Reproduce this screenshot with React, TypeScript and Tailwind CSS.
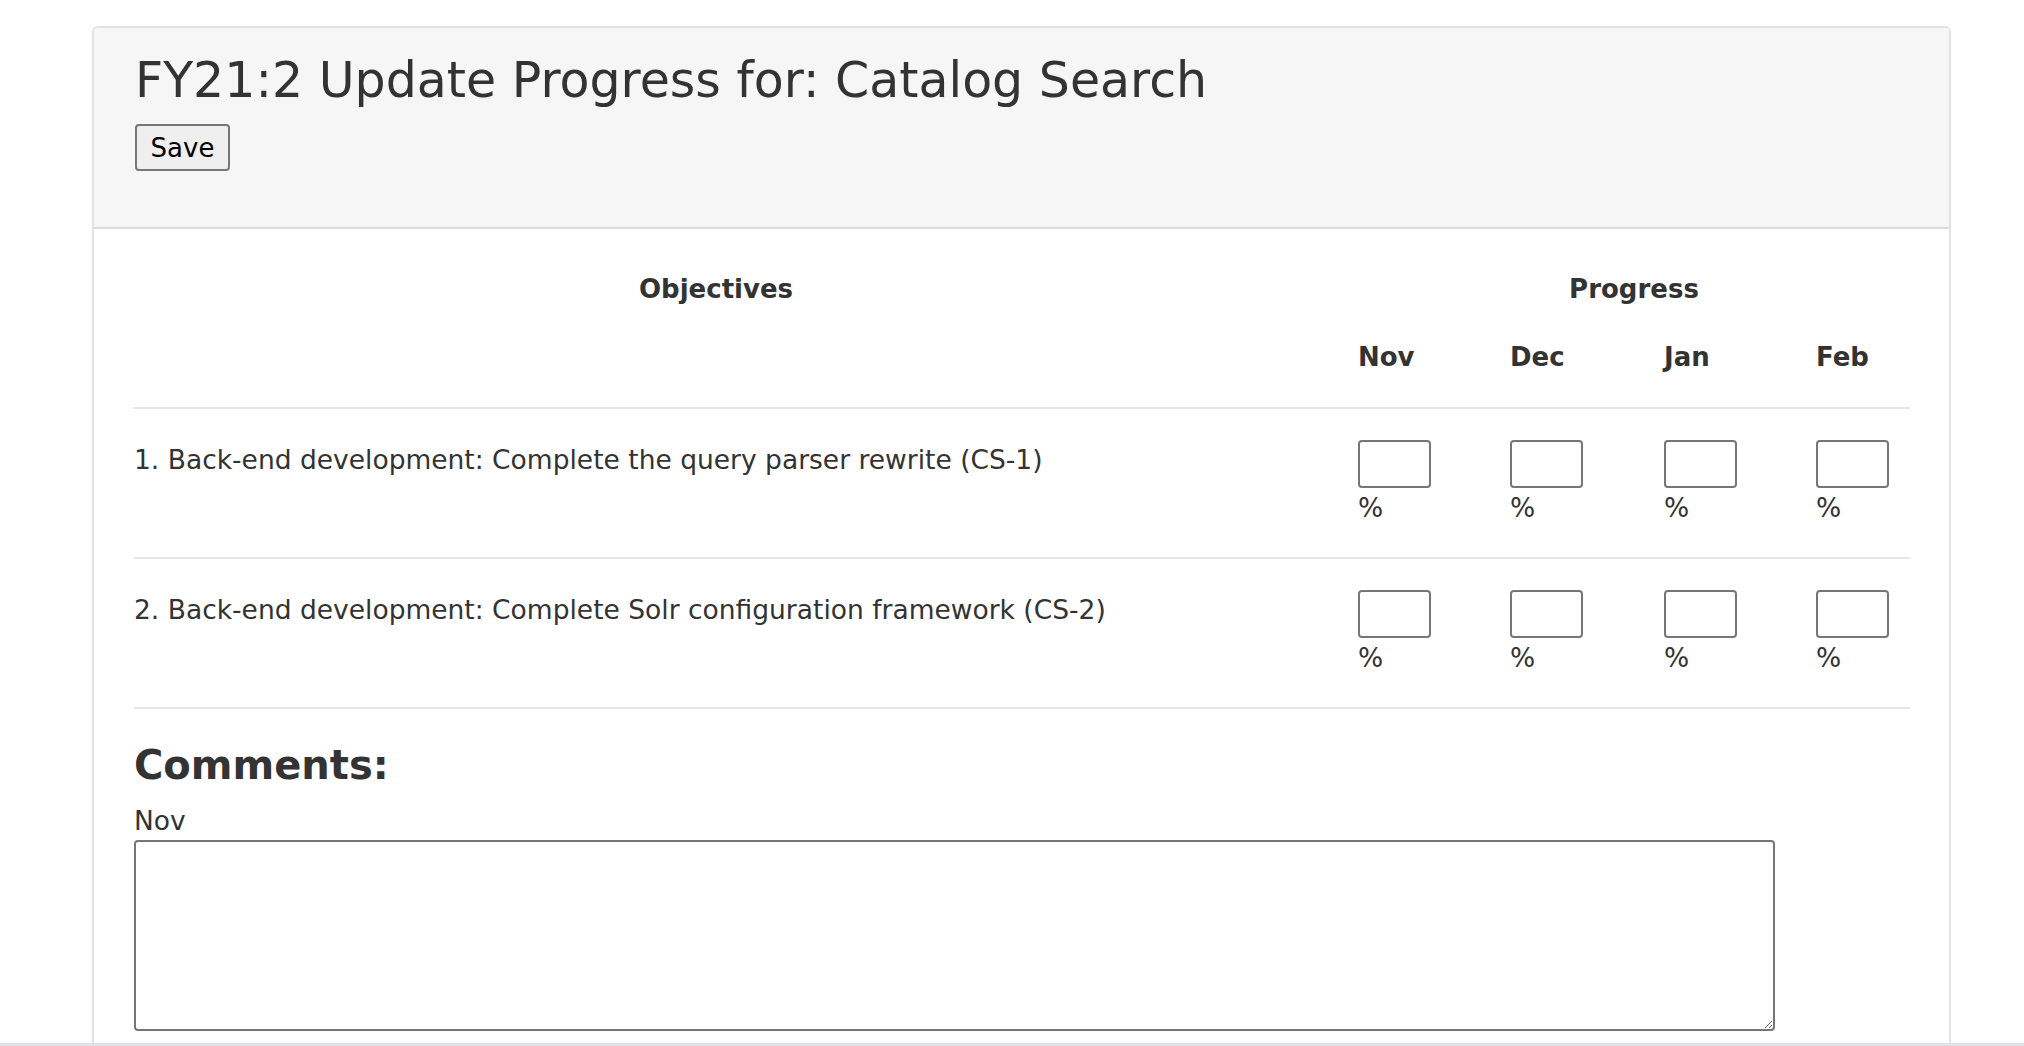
import React from 'react';

const months = ['Nov', 'Dec', 'Jan', 'Feb'];

const objectives = [
    '1. Back-end development: Complete the query parser rewrite (CS-1)',
    '2. Back-end development: Complete Solr configuration framework (CS-2)',
];

const gridCols = 'grid grid-cols-[1224px_152px_154px_152px_94px]';

const PercentInput: React.FC = () => (
    <div className="flex flex-col items-start">
        <input type="text" className="w-[73px] h-[48px] border-2 border-[#767676] rounded-[4px] bg-white" />
        <span className="text-[26.5px] leading-[40px]">%</span>
    </div>
);

const App: React.FC = () => {
    return (
        <div className="min-h-screen bg-white font-['DejaVu_Sans',sans-serif] text-[#333]">
            <div className="pt-[26px] pl-[92px]">
                <div className="w-[1859px] border-2 border-[#e2e2e2] rounded-[6px] overflow-hidden">
                    <div className="h-[201px] bg-[#f6f6f6] border-b-2 border-[#dcdcdc] pl-[41px] pt-[25px]">
                        <h2 className="text-[49px] leading-[56px] font-normal">FY21:2 Update Progress for: Catalog Search</h2>
                        <button className="mt-[15px] w-[95px] h-[47px] border-2 border-[#767676] rounded-[4px] bg-[#efefef] text-[26px] text-black leading-none">
                            Save
                        </button>
                    </div>

                    <div className="pl-[40px] pr-[39px] pt-[40px] pb-[200px]">
                        {/* table head */}
                        <div className={gridCols}>
                            <div className="pr-[60px] text-center font-bold text-[26px] leading-[40px]">Objectives</div>
                            <div className="col-span-4 text-center font-bold text-[26px] leading-[40px]">Progress</div>
                        </div>
                        <div className={`${gridCols} mt-[28px] pb-[30px]`}>
                            <div />
                            {months.map((m) => (
                                <div key={m} className="font-bold text-[26px] leading-[40px]">{m}</div>
                            ))}
                        </div>

                        {/* rows */}
                        {objectives.map((o) => (
                            <div key={o} className={`${gridCols} border-t-2 border-[#e6e6e6] pt-[31px] pb-[29px]`}>
                                <div className="text-[26.5px] leading-[40px]">{o}</div>
                                {months.map((m) => (
                                    <PercentInput key={m} />
                                ))}
                            </div>
                        ))}

                        {/* comments */}
                        <div className="border-t-2 border-[#e6e6e6] pt-[32px]">
                            <h3 className="text-[40px] leading-[48px] font-bold">Comments:</h3>
                            <label className="block mt-[13px] text-[26.5px] leading-[38px]">Nov</label>
                            <textarea className="block w-[1641px] h-[191px] border-2 border-[#767676] rounded-[4px] bg-white" />
                        </div>
                    </div>
                </div>
            </div>
            <div className="fixed bottom-0 left-0 right-0 h-[3px] bg-[#dee2e6]" />
        </div>
    );
};

export default App;
